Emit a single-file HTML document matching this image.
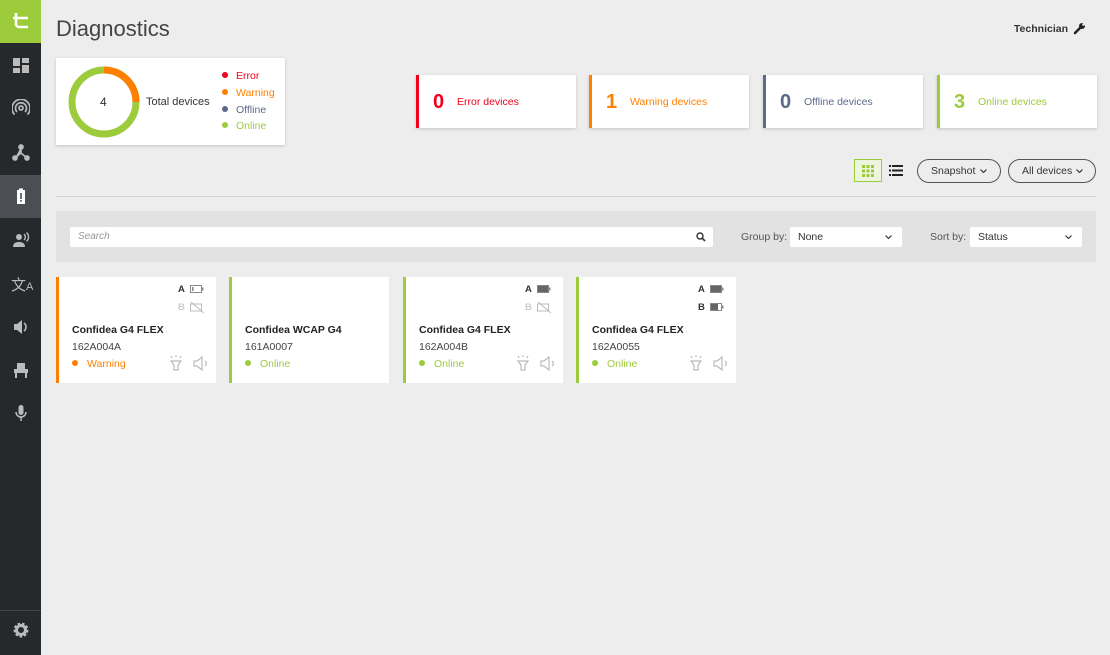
<!DOCTYPE html>
<html><head><meta charset="utf-8"><style>
*{margin:0;padding:0;box-sizing:border-box}
body{width:1110px;height:655px;background:#ededed;font-family:"Liberation Sans",sans-serif;position:relative;overflow:hidden;color:#333}
.a{position:absolute}
.sb{left:0;top:0;width:41px;height:655px;background:#25292c}
.ic{position:absolute;left:12px;width:18px;height:18px}
.card{background:#fff;box-shadow:0 1px 3px rgba(0,0,0,.18)}
.stat{top:75px;width:160px;height:53px;background:#fff;box-shadow:0 1px 3px rgba(0,0,0,.18);border-left:3px solid}
.stat b{position:absolute;left:14px;top:16px;font-size:20px}
.stat span{position:absolute;left:38px;top:21px;font-size:10.5px}
.pill{top:159px;height:24px;border:1px solid #555;border-radius:12px;font-size:10.5px;line-height:22px;padding-left:13px;color:#333}
.dev{top:277px;width:160px;height:106px;background:#fff;border-left:3px solid}
.dev .n{position:absolute;left:13px;top:47px;font-size:10.5px;font-weight:bold;color:#222}
.dev .id{position:absolute;left:13px;top:64px;font-size:10.5px;color:#444}
.dev .st{position:absolute;left:13px;top:81px;font-size:10.5px}
.dot{display:inline-block;width:6px;height:6px;border-radius:3px;margin-right:9px;vertical-align:1px}
.sel{top:227px;height:20px;background:#fff;border-radius:2px;font-size:10.5px;line-height:20px;padding-left:8px;color:#333}
.chev{position:absolute;right:10px;top:8px;width:7px;height:4px}
</style></head><body>
<div class="a sb"></div>
<div class="a" style="left:0;top:0;width:41px;height:43px;background:#9ccb3b"></div>
<svg class="a" style="left:12px;top:12px" width="18" height="18" viewBox="0 0 18 18" fill="none" stroke="#fff" stroke-width="2.6"><path d="M4 1v11a3 3 0 0 0 3 3h9M1 6h15"/></svg>
<div class="a" style="left:0;top:175px;width:41px;height:43px;background:#4b4f53"></div>
<svg class="ic" style="top:56px" viewBox="0 0 18 18" fill="#bbb"><rect x="1" y="2" width="7" height="8"/><rect x="10" y="2" width="7" height="5"/><rect x="1" y="12" width="7" height="5"/><rect x="10" y="9" width="7" height="8"/></svg>
<svg class="ic" style="top:99px" viewBox="0 0 18 18" fill="none" stroke="#bbb" stroke-width="1.7"><circle cx="9" cy="9" r="2"/><path d="M5 13a5.5 5.5 0 1 1 8 0M2.5 15.5a9 9 0 1 1 13 0"/></svg>
<svg class="ic" style="top:143px" viewBox="0 0 18 18" fill="#bbb" stroke="#bbb" stroke-width="1.7"><circle cx="9" cy="4" r="2"/><circle cx="3" cy="15" r="2"/><circle cx="15" cy="15" r="2"/><path d="M9 4v6L3 15M9 10l6 5"/></svg>
<svg class="ic" style="top:187px" viewBox="0 0 18 18"><rect x="5" y="3" width="8" height="14" fill="#fff"/><rect x="7" y="1.5" width="4" height="2" fill="#fff"/><rect x="8.2" y="6" width="1.6" height="6" fill="#4b4f53"/><rect x="8.2" y="13" width="1.6" height="1.6" fill="#4b4f53"/></svg>
<svg class="ic" style="top:231px" viewBox="0 0 18 18" fill="#bbb"><circle cx="7" cy="6" r="3"/><path d="M1 16c0-4 3-5 6-5s6 1 6 5z"/><path d="M12 3a4 4 0 0 1 0 6M14.5 1.5a6 6 0 0 1 0 9" stroke="#bbb" fill="none" stroke-width="1.4"/></svg>
<div class="a" style="left:11px;top:274px;font-size:15px;color:#bbb">文<span style="font-size:11px">A</span></div>
<svg class="ic" style="top:318px" viewBox="0 0 18 18" fill="#bbb"><path d="M2 6h3l5-4v14l-5-4H2z"/><path d="M12 5a5 5 0 0 1 0 8" stroke="#bbb" stroke-width="1.6" fill="none"/></svg>
<svg class="ic" style="top:361px" viewBox="0 0 18 18" fill="#bbb"><rect x="5" y="2" width="8" height="8"/><rect x="2" y="8" width="14" height="4"/><rect x="3" y="12" width="2" height="5"/><rect x="13" y="12" width="2" height="5"/></svg>
<svg class="ic" style="top:404px" viewBox="0 0 18 18" fill="#bbb"><rect x="6.5" y="1" width="5" height="10" rx="2.5"/><path d="M4 8a5 5 0 0 0 10 0M9 13v4" stroke="#bbb" stroke-width="1.5" fill="none"/></svg>
<div class="a" style="left:0;top:610px;width:41px;height:1px;background:#444"></div>
<svg class="ic" style="top:621px" viewBox="0 0 18 18"><circle cx="9" cy="9" r="5.5" fill="none" stroke="#bbb" stroke-width="4" stroke-dasharray="2.2 1.6"/><circle cx="9" cy="9" r="4.5" fill="none" stroke="#bbb" stroke-width="3"/></svg>

<div class="a" style="left:56px;top:16px;font-size:22px;color:#444">Diagnostics</div>
<div class="a" style="right:42px;top:23px;font-size:10.5px;color:#333;font-weight:bold;white-space:nowrap">Technician</div>
<svg class="a" style="left:1073px;top:22px" width="13" height="13" viewBox="0 0 13 13"><path d="M2 11L7 6" stroke="#222" stroke-width="2.5" stroke-linecap="round"/><circle cx="9" cy="4" r="3" fill="#222"/><circle cx="10.5" cy="2.5" r="1.3" fill="#ededed"/></svg>

<div class="a card" style="left:56px;top:58px;width:229px;height:87px"></div>
<svg class="a" style="left:68px;top:66px" width="72" height="72" viewBox="0 0 72 72"><circle cx="36" cy="36" r="32" fill="none" stroke="#9ccb3b" stroke-width="7"/><path d="M36 4A32 32 0 0 1 68 36" fill="none" stroke="#ff8000" stroke-width="7"/></svg>
<div class="a" style="left:100px;top:95px;font-size:12px;color:#333">4</div>
<div class="a" style="left:146px;top:96px;font-size:11px;color:#333">Total devices</div>
<div class="a" style="left:222px;top:68px;font-size:10.5px;line-height:16.8px">
<div style="color:#f0001c"><span class="dot" style="background:#f0001c;margin-right:8px"></span>Error</div>
<div style="color:#ff8000"><span class="dot" style="background:#ff8000;margin-right:8px"></span>Warning</div>
<div style="color:#5b6a8a"><span class="dot" style="background:#5b6a8a;margin-right:8px"></span>Offline</div>
<div style="color:#9ccb3b"><span class="dot" style="background:#9ccb3b;margin-right:8px"></span>Online</div></div>

<div class="a stat" style="left:416px;border-color:#f0001c"><b style="color:#f0001c">0</b><span style="color:#f0001c">Error devices</span></div>
<div class="a stat" style="left:589px;border-color:#ff8000"><b style="color:#ff8000">1</b><span style="color:#ff8000">Warning devices</span></div>
<div class="a stat" style="left:763px;border-color:#5b6a8a"><b style="color:#5b6a8a">0</b><span style="color:#5b6a8a">Offline devices</span></div>
<div class="a stat" style="left:937px;border-color:#9ccb3b"><b style="color:#9ccb3b">3</b><span style="color:#9ccb3b">Online devices</span></div>

<div class="a" style="left:854px;top:159px;width:28px;height:23px;border:1px solid #9ccb3b;background:#eef5df"></div>
<svg class="a" style="left:862px;top:165px" width="12" height="12" viewBox="0 0 12 12" fill="#9ccb3b"><rect x="0" y="0" width="3" height="3"/><rect x="4.5" y="0" width="3" height="3"/><rect x="9" y="0" width="3" height="3"/><rect x="0" y="4.5" width="3" height="3"/><rect x="4.5" y="4.5" width="3" height="3"/><rect x="9" y="4.5" width="3" height="3"/><rect x="0" y="9" width="3" height="3"/><rect x="4.5" y="9" width="3" height="3"/><rect x="9" y="9" width="3" height="3"/></svg>
<svg class="a" style="left:889px;top:165px" width="14" height="11" viewBox="0 0 14 11" fill="#222"><rect x="0" y="0" width="2" height="2"/><rect x="3" y="0" width="11" height="2"/><rect x="0" y="4.5" width="2" height="2"/><rect x="3" y="4.5" width="11" height="2"/><rect x="0" y="9" width="2" height="2"/><rect x="3" y="9" width="11" height="2"/></svg>
<div class="a pill" style="left:917px;width:84px">Snapshot<svg class="chev" style="right:13px;top:9px" viewBox="0 0 7 4"><path d="M.5.5l3 3 3-3" fill="none" stroke="#333" stroke-width="1.2"/></svg></div>
<div class="a pill" style="left:1008px;width:88px">All devices<svg class="chev" style="right:12px;top:9px" viewBox="0 0 7 4"><path d="M.5.5l3 3 3-3" fill="none" stroke="#333" stroke-width="1.2"/></svg></div>
<div class="a" style="left:56px;top:196px;width:1040px;height:1px;background:#d4d4d4"></div>

<div class="a" style="left:56px;top:211px;width:1040px;height:51px;background:#e2e2e2"></div>
<div class="a sel" style="left:70px;width:643px;color:#999;font-style:italic;font-size:10px">Search</div>
<svg class="a" style="left:696px;top:232px" width="10" height="10" viewBox="0 0 10 10"><circle cx="4" cy="4" r="3" fill="none" stroke="#333" stroke-width="1.4"/><path d="M6 6l3 3" stroke="#333" stroke-width="1.6"/></svg>
<div class="a" style="left:741px;top:231px;font-size:10.5px;color:#555">Group by:</div>
<div class="a sel" style="left:790px;width:112px">None<svg class="chev" viewBox="0 0 7 4"><path d="M.5.5l3 3 3-3" fill="none" stroke="#333" stroke-width="1.2"/></svg></div>
<div class="a" style="left:930px;top:231px;font-size:10.5px;color:#555">Sort by:</div>
<div class="a sel" style="left:970px;width:112px">Status<svg class="chev" viewBox="0 0 7 4"><path d="M.5.5l3 3 3-3" fill="none" stroke="#333" stroke-width="1.2"/></svg></div>

<div class="a dev" style="left:56px;border-color:#ff8000">
 <div class="a" style="left:119px;top:7px;font-size:9.5px;font-weight:bold">A</div>
 <svg class="a" style="left:131px;top:8px" width="14" height="8"><rect x="0.5" y="0.5" width="11" height="7" fill="none" stroke="#888"/><rect x="12" y="2.5" width="1.5" height="3" fill="#888"/><rect x="2" y="2" width="1.5" height="4" fill="#888"/></svg>
 <div class="a" style="left:119px;top:25px;font-size:9.5px;color:#ccc;font-weight:bold">B</div>
 <svg class="a" style="left:131px;top:24px" width="15" height="13"><rect x="0.5" y="3" width="11" height="7" fill="none" stroke="#bbb"/><path d="M1 1l13 11" stroke="#bbb"/></svg>
 <div class="n">Confidea G4 FLEX</div><div class="id">162A004A</div>
 <div class="st" style="color:#ff8000"><span class="dot" style="background:#ff8000"></span>Warning</div>
 <svg class="a" style="left:109px;top:77px" width="16" height="17" viewBox="0 0 16 17" fill="none" stroke="#bbb" stroke-width="1.2"><path d="M3 7h10l-3 4v5H6v-5z M8 1v2M3 2l1 2M13 2l-1 2"/></svg>
 <svg class="a" style="left:134px;top:79px" width="16" height="15" viewBox="0 0 16 15" fill="none" stroke="#bbb" stroke-width="1.2"><path d="M1 5h3l5-4v13L4 10H1z M12 5a3 3 0 0 1 0 5"/></svg>
</div>
<div class="a dev" style="left:229px;border-color:#9ccb3b">
 <div class="n">Confidea WCAP G4</div><div class="id">161A0007</div>
 <div class="st" style="color:#9ccb3b"><span class="dot" style="background:#9ccb3b"></span>Online</div>
</div>
<div class="a dev" style="left:403px;border-color:#9ccb3b">
 <div class="a" style="left:119px;top:7px;font-size:9.5px;font-weight:bold">A</div>
 <svg class="a" style="left:131px;top:8px" width="14" height="8"><rect x="0.5" y="0.5" width="11" height="7" fill="#666" stroke="#888"/><rect x="12" y="2.5" width="1.5" height="3" fill="#888"/></svg>
 <div class="a" style="left:119px;top:25px;font-size:9.5px;color:#ccc;font-weight:bold">B</div>
 <svg class="a" style="left:131px;top:24px" width="15" height="13"><rect x="0.5" y="3" width="11" height="7" fill="none" stroke="#bbb"/><path d="M1 1l13 11" stroke="#bbb"/></svg>
 <div class="n">Confidea G4 FLEX</div><div class="id">162A004B</div>
 <div class="st" style="color:#9ccb3b"><span class="dot" style="background:#9ccb3b"></span>Online</div>
 <svg class="a" style="left:109px;top:77px" width="16" height="17" viewBox="0 0 16 17" fill="none" stroke="#bbb" stroke-width="1.2"><path d="M3 7h10l-3 4v5H6v-5z M8 1v2M3 2l1 2M13 2l-1 2"/></svg>
 <svg class="a" style="left:134px;top:79px" width="16" height="15" viewBox="0 0 16 15" fill="none" stroke="#bbb" stroke-width="1.2"><path d="M1 5h3l5-4v13L4 10H1z M12 5a3 3 0 0 1 0 5"/></svg>
</div>
<div class="a dev" style="left:576px;border-color:#9ccb3b">
 <div class="a" style="left:119px;top:7px;font-size:9.5px;font-weight:bold">A</div>
 <svg class="a" style="left:131px;top:8px" width="14" height="8"><rect x="0.5" y="0.5" width="11" height="7" fill="#666" stroke="#888"/><rect x="12" y="2.5" width="1.5" height="3" fill="#888"/></svg>
 <div class="a" style="left:119px;top:25px;font-size:9.5px;font-weight:bold">B</div>
 <svg class="a" style="left:131px;top:26px" width="14" height="8"><rect x="0.5" y="0.5" width="11" height="7" fill="none" stroke="#888"/><rect x="1" y="1" width="7" height="6" fill="#666"/><rect x="12" y="2.5" width="1.5" height="3" fill="#888"/></svg>
 <div class="n">Confidea G4 FLEX</div><div class="id">162A0055</div>
 <div class="st" style="color:#9ccb3b"><span class="dot" style="background:#9ccb3b"></span>Online</div>
 <svg class="a" style="left:109px;top:77px" width="16" height="17" viewBox="0 0 16 17" fill="none" stroke="#bbb" stroke-width="1.2"><path d="M3 7h10l-3 4v5H6v-5z M8 1v2M3 2l1 2M13 2l-1 2"/></svg>
 <svg class="a" style="left:134px;top:79px" width="16" height="15" viewBox="0 0 16 15" fill="none" stroke="#bbb" stroke-width="1.2"><path d="M1 5h3l5-4v13L4 10H1z M12 5a3 3 0 0 1 0 5"/></svg>
</div>
</body></html>
